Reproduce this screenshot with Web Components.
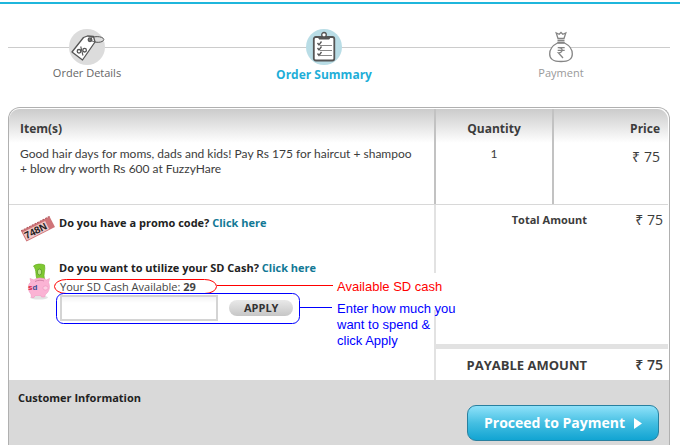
<!DOCTYPE html>
<html lang="en">
<head>
<meta charset="utf-8">
<meta name="viewport" content="width=device-width, initial-scale=1">
<title>Order Summary</title>
<style>
  body {
    margin: 0;
    background: #fff;
    color: #3c3c3c;
    font: 11px/16px "Open Sans", "Noto Sans", sans-serif;
  }
</style>
</head>
<body>
<checkout-page></checkout-page>

<script>
const icons = {
  tag: `
    <svg width="36" height="36" viewBox="0 0 36 36" fill="none" stroke="#555" stroke-width="1.3">
      <circle cx="18" cy="18" r="18" fill="#dcdcdc" stroke="none"/>
      <path d="M18.5 7 L24.5 7.5 L26 13 L13.5 31 L3 23 L14.5 8.5 Z" fill="#fff" stroke-linejoin="round"/>
      <circle cx="21" cy="10.7" r="1.8" fill="#888"/>
      <path d="M21 10.5 C22 6.5 34.5 6.8 34.8 10.5 C34.5 14 25 14.5 21 10.5" stroke-width="1"/>
      <circle cx="10" cy="22.3" r="1.8"/>
      <circle cx="15.6" cy="21.2" r="1.8"/>
      <path d="M11.7 17.5 L14 26.5" stroke-width="1.1"/>
    </svg>`,
  list: `
    <svg width="36" height="36" viewBox="0 0 36 36" fill="none" stroke="#555">
      <circle cx="18" cy="18" r="18" fill="#b9dde6" stroke="none"/>
      <rect x="7.8" y="8" width="20.5" height="23.5" rx="2" fill="#fff" stroke-width="1.8"/>
      <circle cx="18" cy="5.8" r="2.3" fill="#fff" stroke-width="1.3"/>
      <path d="M13 10 V7.5 H16 L18 8.5 L20 7.5 H23.3 V10 Z" fill="#555"/>
      <path d="M14 16.5 H26 M14 21.5 H26 M14 26.5 H26" stroke="#888"/>
      <path d="M11.5 14 L13 16 L15.5 12.5 M11.5 19 L13 21 L15.5 17.5 M11.5 24.5 L13 26.5 L15.5 23" stroke-width="1.3"/>
    </svg>`,
  bag: `
    <svg width="36" height="36" viewBox="0 0 36 36" fill="none" stroke="#858585" stroke-width="1.3">
      <path d="M14.5 14 C9.5 16.5 6.7 20.5 6.7 25 C6.7 30.5 10 32.5 18 32.5 C26 32.5 29.3 30.5 29.3 25 C29.3 20.5 26.5 16.5 21.5 14 Z" fill="#fff"/>
      <path d="M15 9.5 L13.2 4 L16.2 5.3 L18 3.5 L19.8 5.3 L22.8 4 L21 9.5 Z" fill="#fff"/>
      <path d="M14.5 11.5 H21.5 M14.5 13.5 H21.5"/>
      <path d="M14.7 18.7 H21.7 M14.7 21.4 H21.7 M15 18.7 C20.5 18.2 20.5 24 15.3 23.8 L20 29"/>
    </svg>`,
  coupon: `
    <svg width="34" height="28" viewBox="0 0 34 28">
      <g transform="rotate(-27 17 14)">
        <rect x="1" y="8" width="32" height="12" fill="#cf7478"/>
        <rect x="2" y="10" width="25" height="9" fill="#efc9c9"/>
        <path d="M1 8 H33" stroke="#b0575c" stroke-dasharray="2 1"/>
        <text x="2" y="18" font-family="Liberation Sans" font-size="10" font-weight="bold" fill="#221c1c">748N</text>
      </g>
    </svg>`,
  piggy: `
    <svg width="24" height="38" viewBox="0 0 24 38">
      <ellipse cx="12" cy="34.5" rx="9" ry="2" fill="#e3e3e3"/>
      <path d="M6.5 3 C9 .8 14 .5 17.5 2 C18.8 7 16 11 17.5 16 L11 17.5 C7.5 13 10.5 8 6.5 3 Z" fill="#7fc832" stroke="#69b021" stroke-width=".7"/>
      <ellipse cx="12.5" cy="9" rx="2.2" ry="3" fill="#b9e087" stroke="#4d901b" stroke-width=".7"/>
      <path d="M3 15.5 L7 17 C11 14 17 15 19.5 17 L22.5 15.5 L21.5 19.5 C23.5 24 22 29 18.5 31.5 L17.5 34 H14.5 L14 32.5 H8 L7 34.5 H4.5 L4 31 C.5 27.5 .5 21 4 19 Z" fill="#fbb3d4" stroke="#f29fc6" stroke-width=".7"/>
      <path d="M8 18.5 C11 16.8 15 17 17 18" stroke="#d583a9" fill="none"/>
      <ellipse cx="18.5" cy="25" rx="2.6" ry="2.1" fill="#fdcfe3" stroke="#ec95bf" stroke-width=".6"/>
      <text x="1" y="27" font-family="Liberation Sans" font-size="8" font-weight="bold" fill="#d7213b">s<tspan fill="#384a91">d</tspan></text>
    </svg>`
};

class CheckoutStep extends HTMLElement {
  constructor() {
    super();
    this.attachShadow({ mode: 'open' });
  }

  connectedCallback() {
    this.shadowRoot.innerHTML = `
      <style>
        :host {
          display: flex;
          flex-direction: column;
          align-items: center;
          color: #666;
        }
        :host([state="current"]) {
          color: #1eaed8;
          font-size: 12px;
          line-height: 19px;
          font-weight: bold;
        }
        :host([state="next"]) { color: #999; }
        svg { display: block; }
      </style>
      ${icons[this.getAttribute('icon')]}
      <slot></slot>
    `;
  }
}

class CheckoutSteps extends HTMLElement {
  constructor() {
    super();
    this.attachShadow({ mode: 'open' });
    this.shadowRoot.innerHTML = `
      <style>
        :host {
          display: grid;
          grid-template-columns: 1fr 2fr 1fr;
          margin: 0 10px 0 8px;
          padding: 25px 30px 23px 0;
          background: linear-gradient(#ccc, #ccc) 0 43px / 100% 1px no-repeat;
        }
      </style>
      <slot></slot>
    `;
  }
}

class OrderItems extends HTMLElement {
  constructor() {
    super();
    this.attachShadow({ mode: 'open' });
    this._items = [{
      name: 'Good hair days for moms, dads and kids! Pay Rs 175 for haircut + shampoo + blow dry worth Rs 600 at FuzzyHare',
      quantity: 1,
      price: 75
    }];
  }

  connectedCallback() {
    const rows = this._items.map(item => `
      <tr>
        <td class="name">${item.name}</td>
        <td class="quantity">${item.quantity}</td>
        <td class="price">₹ ${item.price}</td>
      </tr>`).join('');

    this.shadowRoot.innerHTML = `
      <style>
        :host {
          display: block;
          border-bottom: 1px solid #d8d8d8;
          border-radius: 11px 11px 0 0;
          background: linear-gradient(#cbcbcb, #fff 34px);
        }
        table {
          width: 100%;
          table-layout: fixed;
          border-collapse: separate;
          border-spacing: 0;
        }
        th, td {
          box-sizing: border-box;
          vertical-align: top;
          text-align: left;
        }
        th {
          height: 37px;
          padding: 11px 8px 0 11px;
          font-size: 12px;
          line-height: 18px;
        }
        td {
          height: 58px;
          padding: 0 8px 0 11px;
          font: 12px/15px Lato, sans-serif;
        }
        td.name { padding-right: 18px; }
        .quantity {
          width: 118px;
          padding-left: 8px;
          border-left: 2px solid #c2c2c2;
          text-align: center;
        }
        .price {
          width: 116px;
          border-left: 2px solid #c2c2c2;
          text-align: right;
        }
        td.price {
          padding-top: 1px;
          font: 14px/20px "Open Sans", sans-serif;
        }
      </style>
      <table>
        <thead>
          <tr>
            <th>Item(s)</th>
            <th class="quantity">Quantity</th>
            <th class="price">Price</th>
          </tr>
        </thead>
        <tbody>${rows}</tbody>
      </table>
    `;
  }
}

class OrderOffers extends HTMLElement {
  constructor() {
    super();
    this.attachShadow({ mode: 'open' });
    this.shadowRoot.innerHTML = `
      <style>
        :host {
          position: relative;
          display: grid;
          grid-template-columns: 50px 1fr;
          grid-template-rows: 45px auto;
          align-content: start;
          padding-top: 10px;
        }
        p { margin: 0; }
        .question {
          color: #222;
          font-weight: bold;
        }
        a {
          color: #127895;
          text-decoration: none;
        }
        .coupon { padding-left: 12px; }
        .piggy { padding: 3px 0 0 18px; }
        .icon svg { display: block; }
        form {
          display: flex;
          align-items: center;
          gap: 11px;
          padding-left: 1px;
        }
        .balance {
          padding: 3px 0 0 1px;
          color: #444;
        }
        input {
          box-sizing: border-box;
          width: 158px;
          height: 26px;
          padding: 2px 6px;
          border: 2px solid #d4d4d4;
          background: linear-gradient(#f3f3f3, #fff 6px);
          font: inherit;
        }
        button {
          height: 16px;
          padding: 0 15px;
          border: 0;
          border-radius: 8px;
          background: linear-gradient(#e9e9e9, #c6c6c6);
          color: #333;
          font: bold 11px/16px "Open Sans", sans-serif;
        }
        .marks {
          position: absolute;
          left: 0;
          top: 0;
          fill: none;
          pointer-events: none;
        }
        .note {
          position: absolute;
          left: 328px;
          width: 120px;
          font: 13px/16px "Liberation Sans", sans-serif;
          z-index: 1;
        }
        .available {
          top: 68px;
          padding: 6px 0 15px;
          background: #fff;
          color: #f00;
        }
        .amount {
          top: 96px;
          color: #00f;
        }
      </style>
      <div class="icon coupon">${icons.coupon}</div>
      <p class="question">Do you have a promo code? <a href="#promo">Click here</a></p>
      <div class="icon piggy">${icons.piggy}</div>
      <div>
        <p class="question">Do you want to utilize your SD Cash? <a href="#cash">Click here</a></p>
        <p class="balance" id="balance">Your SD Cash Available: <b>29</b></p>
        <form>
          <input type="text" aria-labelledby="balance">
          <button type="button">APPLY</button>
        </form>
      </div>
      <svg class="marks" width="330" height="130" aria-hidden="true">
        <path d="M208 80.5 H324" stroke="#f00"/>
        <rect x="45.5" y="74.5" width="162" height="14" rx="12" ry="7" stroke="#f00"/>
        <path d="M290 102.5 H323" stroke="#00f"/>
        <rect x="47.5" y="88.5" width="243" height="30" rx="7" stroke="#00f"/>
      </svg>
      <div class="note available">Available SD cash</div>
      <div class="note amount">Enter how much you want to spend &amp; click Apply</div>
    `;
  }
}

class OrderTotals extends HTMLElement {
  constructor() {
    super();
    this.attachShadow({ mode: 'open' });
    this.shadowRoot.innerHTML = `
      <style>
        :host {
          display: flex;
          flex-direction: column;
          justify-content: space-between;
          border-left: 2px solid #e2e2e2;
        }
        .row {
          display: grid;
          grid-template-columns: 1fr 76px;
          align-items: center;
          padding: 5px 5px 0 0;
          text-align: right;
          font-weight: bold;
        }
        .value {
          font-size: 14px;
          line-height: 20px;
          font-weight: normal;
        }
        .payable {
          padding: 6px 5px 5px 0;
          border-top: 5px solid #e2e2e2;
          font-size: 13px;
          line-height: 20px;
        }
        .payable .value { font-weight: 600; }
      </style>
      <div class="row">
        <span>Total Amount</span>
        <span class="value">₹ 75</span>
      </div>
      <div class="row payable">
        <span>PAYABLE AMOUNT</span>
        <span class="value">₹ 75</span>
      </div>
    `;
  }
}

class CustomerInfo extends HTMLElement {
  constructor() {
    super();
    this.attachShadow({ mode: 'open' });
    this.shadowRoot.innerHTML = `
      <style>
        :host {
          display: flex;
          justify-content: space-between;
          align-items: flex-start;
          padding: 9px 10px 4px 9px;
          background: #d9d9d9;
        }
        h2 {
          margin: 0;
          color: #222;
          font-size: 11px;
          line-height: 18px;
        }
        button {
          display: flex;
          align-items: center;
          gap: 9px;
          height: 36px;
          margin-top: 16px;
          padding: 0 16px;
          border: 1px solid #28809f;
          border-radius: 9px;
          background: linear-gradient(#8fe2fa, #45bfe2 50%, #12a4d2);
          color: #fff;
          font: bold 14px/20px "Open Sans", sans-serif;
        }
      </style>
      <h2>Customer Information</h2>
      <button type="button">
        Proceed to Payment
        <svg width="8" height="11" viewBox="0 0 8 11" fill="#fff"><path d="M0 0 L8 5.5 L0 11 Z"/></svg>
      </button>
    `;
  }
}

class CheckoutPage extends HTMLElement {
  constructor() {
    super();
    this.attachShadow({ mode: 'open' });
    this.shadowRoot.innerHTML = `
      <style>
        :host {
          box-sizing: border-box;
          display: flex;
          flex-direction: column;
          min-height: 100vh;
          padding-top: 2px;
        }
        checkout-steps { flex: none; }
        .bar {
          height: 2px;
          background: #1fb6dc;
        }
        .card {
          flex: 1;
          display: flex;
          flex-direction: column;
          margin: 0 10px 0 8px;
          border: 1px solid #b0b0b0;
          border-bottom: 0;
          border-radius: 12px 12px 0 0;
        }
        order-items { margin: 1px 1px 0 0; }
        .details {
          display: grid;
          grid-template-columns: 1fr 234px;
          min-height: 175px;
          padding-right: 1px;
        }
        customer-info { flex: 1; }
      </style>
      <div class="bar"></div>
      <checkout-steps>
        <checkout-step icon="tag">Order Details</checkout-step>
        <checkout-step icon="list" state="current">Order Summary</checkout-step>
        <checkout-step icon="bag" state="next">Payment</checkout-step>
      </checkout-steps>
      <div class="card">
        <order-items></order-items>
        <div class="details">
          <order-offers></order-offers>
          <order-totals></order-totals>
        </div>
        <customer-info></customer-info>
      </div>
    `;
  }
}

customElements.define('checkout-step', CheckoutStep);
customElements.define('checkout-steps', CheckoutSteps);
customElements.define('order-items', OrderItems);
customElements.define('order-offers', OrderOffers);
customElements.define('order-totals', OrderTotals);
customElements.define('customer-info', CustomerInfo);
customElements.define('checkout-page', CheckoutPage);
</script>
</body>
</html>
